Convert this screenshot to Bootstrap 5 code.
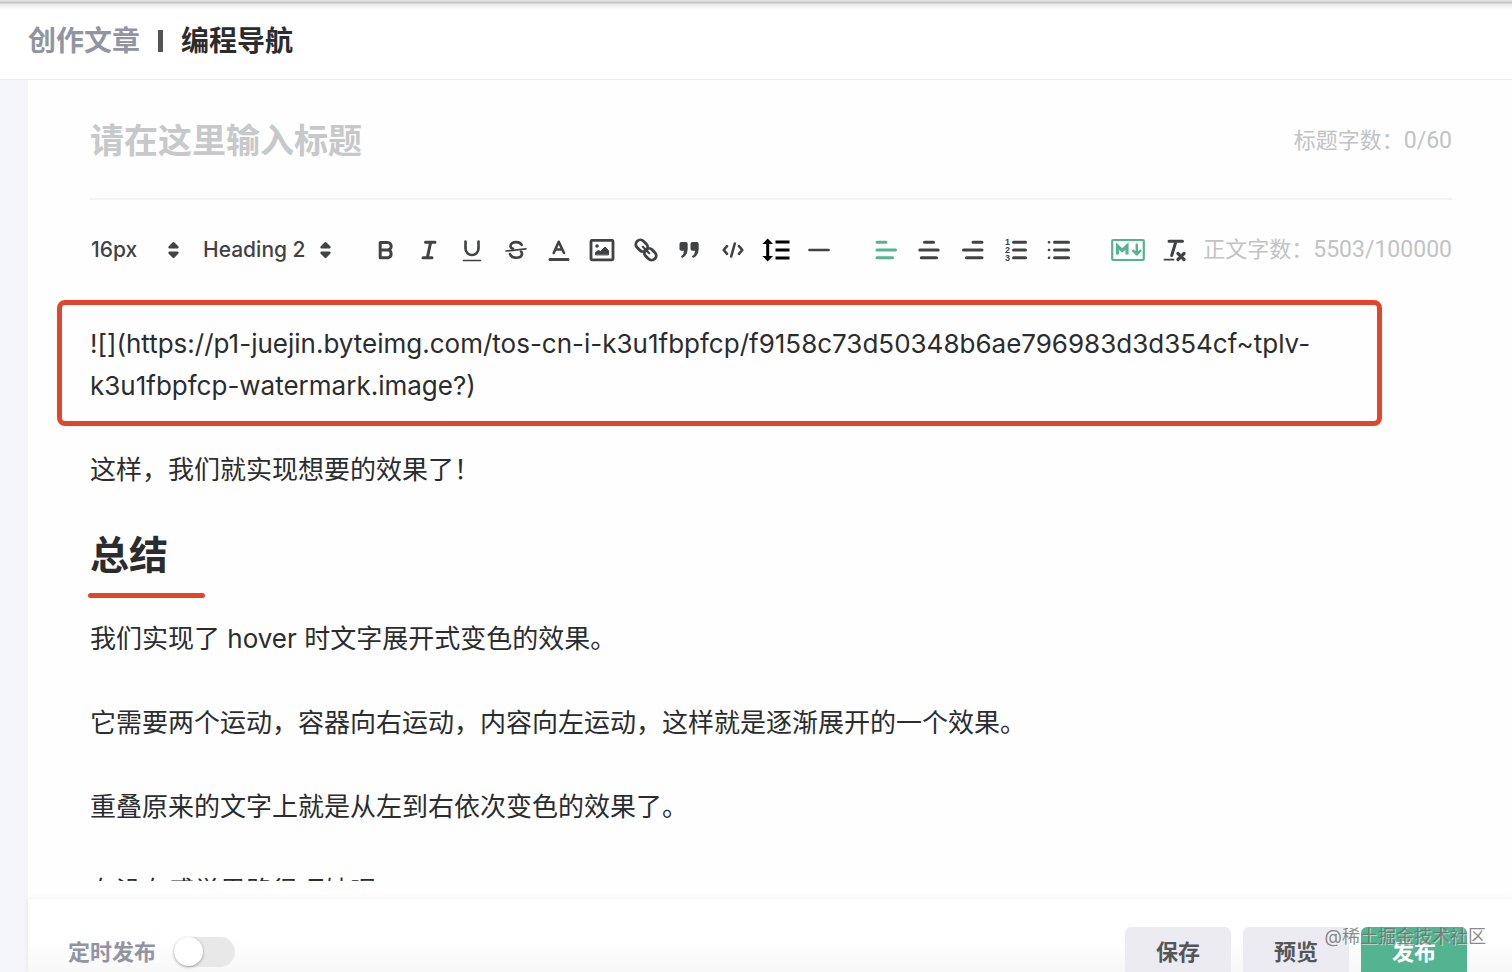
<!DOCTYPE html>
<html lang="zh-CN">
<head>
<meta charset="utf-8">
<meta name="viewport" content="width=device-width, initial-scale=1">
<title>创作文章 - 编程导航</title>
<link href="https://cdn.jsdelivr.net/npm/bootstrap@5.3.0/dist/css/bootstrap.min.css" rel="stylesheet">
<style>
:root { --ink: #2b2c2e; --icon: #414243; --muted: #8a8b99; --faint: #c2c3c5; --brand: #54b491; --anno: #e2452c; }
body { font-family: Inter, "Noto Sans CJK SC", sans-serif; color: var(--ink); background: #f4f6fa; }
.topbar { height: 80px; padding: 2px 28px 0; background: linear-gradient(#e2e2e2 1px, #c6c6c6 2px, #c6c6c6 3px, #e9e9e9 4px, #fff 10px); border-bottom: 1px solid #ebecee; font-size: 28px; line-height: 40px; gap: 18px; }
.topbar a { color: #9294a1; font-weight: 700; text-decoration: none; }
.topbar h1 { font-size: 28px; line-height: 40px; font-weight: 700; }
.topbar-sep { width: 5px; height: 22px; background: #555; }
.sheet { margin-left: 28px; background: #fefefe; }
.sheet-inner { padding: 0 60px 0 62px; }
.title-row { height: 120px; padding-top: 3px; border-bottom: 2px solid #f2f3f4; }
.title-input { border: 0; background: none; outline: 0; font-size: 34px; line-height: 50px; font-weight: 700; color: var(--ink); padding: 0; }
.title-input::placeholder { color: #c6c8ca; opacity: 1; }
.counter { font-family: Roboto, "Noto Sans CJK SC", sans-serif; font-size: 22px; line-height: 32px; color: var(--faint); white-space: nowrap; }
.counter span { font-size: 23px; }
.toolbar-row { height: 100px; padding-bottom: 1px; }
.pick { position: relative; }
.pick select { appearance: none; border: 0; background: none; outline: 0; padding: 0; font-family: Inter, sans-serif; font-weight: 500; font-size: 21px; line-height: 32px; color: var(--icon); width: 100%; }
.pick svg { position: absolute; right: 0; top: 7px; pointer-events: none; }
.pick-size { width: 88px; margin: 0 24px 0 1px; }
.pick-block { width: 128px; margin-right: 33px; }
.tools { width: 477px; }
.tools-align { width: 217px; margin-left: 23px; }
.tool { flex: 1; height: 32px; border: 0; background: none; padding: 0; color: var(--icon); display: flex; align-items: center; justify-content: center; }
.tool svg { flex: none; fill: none; stroke: currentColor; stroke-width: 3; stroke-linecap: round; stroke-linejoin: round; }
.tool.on { color: var(--brand); }
.tool-black { color: #000; }
.tool-md { flex: none; width: 34px; margin-left: 30px; }
.tool-clear { flex: none; width: 28px; margin-left: 16px; }
.doc { font-size: 26px; line-height: 42px; }
.doc p { margin: 0 0 42px; }
.doc .marked { margin: 0 70px 23px -33px; padding: 18px 28px 14px; border: 5px solid var(--anno); border-radius: 8px; }
.doc .tight { margin-bottom: 36px; }
.doc h2 { font-size: 39px; line-height: 56px; font-weight: 700; margin: 0 0 20px; }
.doc h2::after { content: ""; display: block; width: 117px; height: 5px; margin: 10px 0 0 -2px; border-radius: 3px; background: var(--anno); }
.doc-view { margin-bottom: 18px; padding-left: 33px; margin-left: -33px; }
.actions { position: relative; height: 73px; margin-left: 28px; padding: 28px 45px 0 40px; background: linear-gradient(#fff 40px, #f7f7f7); box-shadow: 0 0 6px #00000012; }
.actions label { font-size: 22px; line-height: 50px; font-weight: 700; color: #9294a1; }
.actions .form-check-input { width: 61px; height: 30px; margin: 10px 0 0 18px; border: 0; border-radius: 15px; background: #e8e8e9; box-shadow: none; float: none; }
.actions .form-check-input::before { content: ""; display: block; width: 29px; height: 29px; border-radius: 50%; background: #fff; box-shadow: 0 1px 3px #00000059; }
.action-set { gap: 12px; }
.actions .btn { width: 106px; height: 50px; font-size: 22px; line-height: 50px; padding: 0; border: 0; border-radius: 6px; font-weight: 700; background: #ebebf1; color: #55565a; }
.actions .btn-go { background: var(--brand); color: #fff; }
.stamp { position: absolute; right: 26px; top: 24px; font-size: 18px; line-height: 28px; color: #6b6b6bcc; text-shadow: 1px 1px 0 #ffffff80; pointer-events: none; }
</style>
</head>
<body>
<div class="vh-100 d-flex flex-column overflow-hidden">
  <header class="topbar d-flex align-items-center flex-shrink-0">
    <a href="#">创作文章</a><span class="topbar-sep"></span><h1 class="m-0">编程导航</h1>
  </header>

  <main class="sheet flex-grow-1 d-flex flex-column overflow-hidden">
    <div class="sheet-inner flex-grow-1 d-flex flex-column overflow-hidden">
      <div class="title-row d-flex align-items-center flex-shrink-0">
        <input class="title-input flex-grow-1" type="text" placeholder="请在这里输入标题" aria-label="标题">
        <span class="counter">标题字数：<span>0/60</span></span>
      </div>

      <div class="toolbar-row d-flex align-items-center flex-shrink-0" role="toolbar" aria-label="格式">
        <div class="pick pick-size">
          <select aria-label="字号"><option>16px</option></select>
          <svg width="11" height="18" viewBox="0 0 11 18" fill="#414243"><path d="M4.500 1.500Q5.500.5 6.500 1.500L10.500 5.500Q11 7.500 9.500 7.500H1.500Q0 7.500.5 5.500ZM4.500 16.500Q5.500 17.500 6.500 16.500L10.500 12.500Q11 10.500 9.500 10.500H1.500Q0 10.500.5 12.500Z"/></svg>
        </div>
        <div class="pick pick-block">
          <select aria-label="段落"><option>Heading 2</option></select>
          <svg width="11" height="18" viewBox="0 0 11 18" fill="#414243"><path d="M4.500 1.500Q5.500.5 6.500 1.500L10.500 5.500Q11 7.500 9.500 7.500H1.500Q0 7.500.5 5.500ZM4.500 16.500Q5.500 17.500 6.500 16.500L10.500 12.500Q11 10.500 9.500 10.500H1.500Q0 10.500.5 12.500Z"/></svg>
        </div>
        <div class="tools d-flex flex-shrink-0">
          <button class="tool" type="button" aria-label="加粗"><svg width="28" height="28" viewBox="0 0 28 28"><path d="M8.200 6.500H15.500a3.700 3.700 0 0 1 0 7.400H8.200ZM8.200 13.900H16a4 4 0 0 1 0 7.800H8.200Z"/></svg></button>
          <button class="tool" type="button" aria-label="斜体"><svg width="28" height="28" viewBox="0 0 28 28"><path d="M10.500 6.300H20M8 21.700H17M15.700 6.300 12.300 21.700"/></svg></button>
          <button class="tool" type="button" aria-label="下划线"><svg width="28" height="28" viewBox="0 0 28 28"><path d="M7.500 5.500V12.500a6.500 6.500 0 0 0 13 0V5.500" stroke-width="2.600"/><path d="M5.500 24.500H22.500" stroke-width="1.700"/></svg></button>
          <button class="tool" type="button" aria-label="删除线"><svg width="28" height="28" viewBox="0 0 28 28"><path d="M19.700 8.800C18.500 6.800 16.500 6.100 14 6.100c-3 0-5.500 1.300-5.500 3.800 0 1.600 1.200 2.400 2.500 2.800M8 18c1 2.700 3.300 3.700 6 3.700 3.500 0 6-1.400 6-3.900 0-1-.4-1.700-1-2.200" stroke-width="2.600"/><path d="M4 15 24 12.800" stroke-width="1.700"/></svg></button>
          <button class="tool" type="button" aria-label="文字颜色"><svg width="28" height="28" viewBox="0 0 28 28"><path d="M8.700 17 13.700 5.800 19 17M10.500 13.500H17" stroke-width="2.600"/><path d="M5 23.500H23"/></svg></button>
          <button class="tool" type="button" aria-label="图片"><svg width="28" height="28" viewBox="0 0 28 28"><rect x="3" y="4.300" width="22" height="19.500" rx="1" stroke-width="2.800"/><circle cx="9" cy="10" r="1.800" fill="currentColor" stroke="none"/><path d="M7.500 18.500V16.500l3-2 2 1 4.500-4.500 3.500 3.500v4Z" fill="currentColor" stroke-width="1"/></svg></button>
          <button class="tool" type="button" aria-label="链接"><svg width="28" height="28" viewBox="0 0 28 28"><g transform="rotate(45 14 14)" stroke-width="2.900"><rect x="1.500" y="9.500" width="13" height="9" rx="4.500"/><rect x="13.500" y="9.500" width="13" height="9" rx="4.500"/><path d="M9.500 14H18.500" stroke-width="2.200"/></g></svg></button>
          <button class="tool" type="button" aria-label="引用"><svg width="28" height="28" viewBox="0 0 28 28"><path d="M6.500 6H11Q12.700 6 12.700 8V13Q12.700 19 7.800 21.700 6 22 6 20.300 9 18.500 9 14.800H6.500Q4.500 14.800 4.500 13V8Q4.500 6 6.500 6ZM17.500 6H22Q23.700 6 23.700 8V13Q23.700 19 18.800 21.700 17 22 17 20.300 20 18.500 20 14.800H17.500Q15.500 14.800 15.500 13V8Q15.500 6 17.500 6Z" fill="currentColor" stroke="none"/></svg></button>
          <button class="tool" type="button" aria-label="代码"><svg width="28" height="28" viewBox="0 0 28 28"><path d="M8 10.200 4.700 14 8 17.800M20 10.200 23.300 14 20 17.800M15.800 7.500 12.200 20.500" stroke-width="2.600"/></svg></button>
          <button class="tool tool-black" type="button" aria-label="行高"><svg width="28" height="28" viewBox="0 0 28 28"><path d="M5.700 2.500 11 8H7.200V20H11L5.700 25.500.4 20H4.200V8H.4Z" fill="currentColor" stroke="none"/><path d="M13.500 6H27.500M13.500 14H27.500M13.500 22H27.500" stroke-linecap="butt"/></svg></button>
          <button class="tool" type="button" aria-label="分割线"><svg width="28" height="28" viewBox="0 0 28 28"><path d="M4.500 14H23.500" stroke-width="2.700"/></svg></button>
        </div>
        <div class="tools-align d-flex flex-shrink-0">
          <button class="tool on" type="button" aria-label="左对齐"><svg width="28" height="28" viewBox="0 0 28 28"><path d="M5 6.300H14M5 14H23.500M5 21.700H20.500"/></svg></button>
          <button class="tool" type="button" aria-label="居中"><svg width="28" height="28" viewBox="0 0 28 28"><path d="M9.500 6.300H18.500M4.800 14H23.200M6.300 21.700H21.500"/></svg></button>
          <button class="tool" type="button" aria-label="右对齐"><svg width="28" height="28" viewBox="0 0 28 28"><path d="M14 6.300H23M4.500 14H23M7.500 21.700H23"/></svg></button>
          <button class="tool" type="button" aria-label="有序列表"><svg width="28" height="28" viewBox="0 0 28 28"><path d="M11.500 6.300H23.500M11.500 14H23.500M11.500 21.700H23.500"/><g fill="currentColor" stroke="none" font-family="Liberation Sans" font-weight="700" font-size="9"><text x="3" y="9">1</text><text x="3" y="17">2</text><text x="3" y="25">3</text></g></svg></button>
          <button class="tool" type="button" aria-label="无序列表"><svg width="28" height="28" viewBox="0 0 28 28"><path d="M9.500 6.300H23.500M9.500 14H23.500M9.500 21.700H23.500"/><path d="M4 6.300h.1M4 14h.1M4 21.700h.1" stroke-width="2.600"/></svg></button>
        </div>
        <button class="tool tool-md on" type="button" aria-label="Markdown"><svg width="34" height="28" viewBox="0 0 34 28"><rect x="1.200" y="4" width="31.600" height="20" rx="1" stroke-width="2.200"/><path d="M6.500 18.500V10L11.200 14.500 16 10V18.500" stroke-width="3.200" stroke-linecap="butt" stroke-linejoin="miter"/><path d="M25.800 8.800V17M22.300 14.800 25.800 18.300 29.300 14.800" stroke-width="2.500"/></svg></button>
        <button class="tool tool-clear" type="button" aria-label="清除格式"><svg width="28" height="28" viewBox="0 0 28 28"><path d="M8 5.300H21.500M15 5.300 10.700 19.500"/><path d="M3.500 23.700H12.500" stroke-width="1.800"/><path d="M17 17.500 23 23.500M23 17.500 17 23.500" stroke-width="3.200"/></svg></button>
        <span class="counter ms-auto">正文字数：<span>5503/100000</span></span>
      </div>

      <div class="doc-view flex-grow-1 overflow-hidden">
        <article class="doc">
          <p class="marked">![](https://p1-juejin.byteimg.com/tos-cn-i-k3u1fbpfcp/f9158c73d50348b6ae796983d3d354cf~tplv-k3u1fbpfcp-watermark.image?)</p>
          <p class="tight">这样，我们就实现想要的效果了！</p>
          <h2>总结</h2>
          <p>我们实现了 hover 时文字展开式变色的效果。</p>
          <p>它需要两个运动，容器向右运动，内容向左运动，这样就是逐渐展开的一个效果。</p>
          <p>重叠原来的文字上就是从左到右依次变色的效果了。</p>
          <p>有没有感觉思路很巧妙呢</p>
        </article>
      </div>
    </div>
  </main>

  <footer class="actions d-flex flex-shrink-0">
    <label for="timed">定时发布</label>
    <input class="form-check-input" type="checkbox" role="switch" id="timed">
    <div class="action-set ms-auto d-flex">
      <button class="btn" type="button">保存</button>
      <button class="btn" type="button">预览</button>
      <button class="btn btn-go" type="button">发布</button>
    </div>
    <span class="stamp">@稀土掘金技术社区</span>
  </footer>
</div>
<script src="https://cdn.jsdelivr.net/npm/bootstrap@5.3.0/dist/js/bootstrap.bundle.min.js"></script>
</body>
</html>
